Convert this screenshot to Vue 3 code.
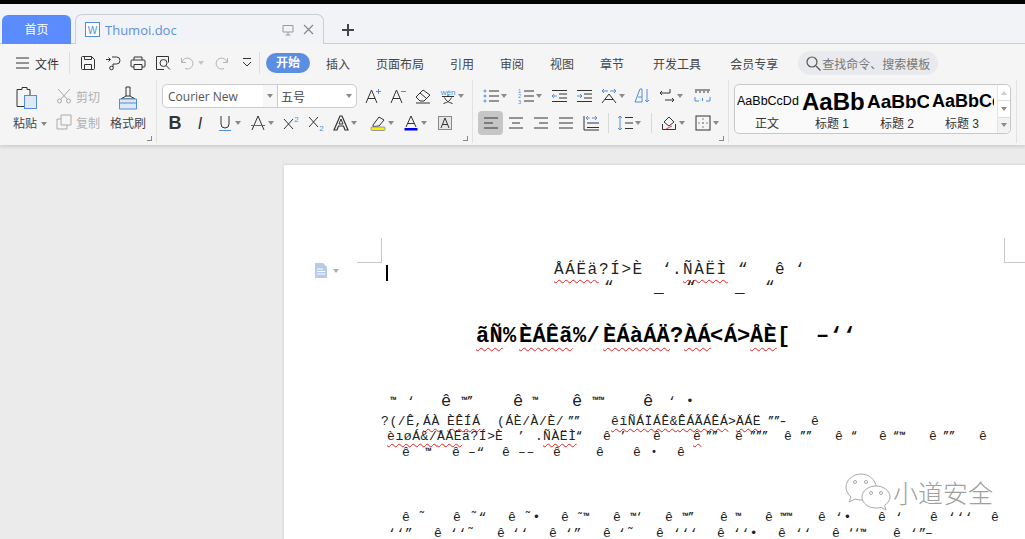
<script setup>
const T = (s, x = 8, y = 13, size = 15, extra = '') =>
  `<text x="${x}" y="${y}" font-size="${size}" text-anchor="middle" fill="#333" stroke="none" font-family="Liberation Sans, sans-serif" ${extra}>${s}</text>`
const blue = '#4f8de0'

const icons = {
  menu: '<path d="M1 3h13M1 8h13M1 13h13"/>',
  save: '<path d="M2.500 1.500h9l3 3v9a1 1 0 0 1-1 1h-11a1 1 0 0 1-1-1v-11a1 1 0 0 1 1-1z"/><path d="M4.500 1.500v3h7v-3M4.500 14.500v-5h7v5"/>',
  pdf: '<path d="M1 4.500h4M3.500 2.500l2 2-2 2M7 2h4.500a3.500 3.500 0 0 1 0 7H8v3"/><circle cx="6.500" cy="13" r="1.800"/>',
  print: '<path d="M4 5V2h8v3M4 12H2a1 1 0 0 1-1-1V6a1 1 0 0 1 1-1h12a1 1 0 0 1 1 1v5a1 1 0 0 1-1 1h-2"/><path d="M4 9.500h8v5H4z"/>',
  preview: '<path d="M9 14.500H1.500v-13h12v6"/><circle cx="8.500" cy="8" r="3.500"/><path d="M11 10.500l4 4"/>',
  undo: '<g stroke="#b4b4b4"><path d="M1.500 3v4.500H6"/><path d="M2 7.500a5.500 5.500 0 1 1 3 6"/></g>',
  redo: '<g stroke="#b4b4b4"><path d="M14.500 3v4.500H10"/><path d="M14 7.500a5.500 5.500 0 1 0-3 6"/></g>',
  more: '<path d="M4 3.500h8M4 7l4 4 4-4"/>',
  grow: '<path d="M1 15L6.500 2 12 15M3 10.500h7"/>' + `<path d="M11 3.500h5M13.500 1v5" stroke="${blue}"/>`,
  shrink: '<path d="M1 15L6.500 2 12 15M3 10.500h7"/>' + `<path d="M11 3.500h5" stroke="${blue}"/>`,
  erase: '<path d="M1 9l7-7 7 5-6 6H5z"/><path d="M1 15h14"/><path d="M5 5l6 5"/>',
  pinyin: `<text x="8" y="6.500" font-size="8" text-anchor="middle" fill="${blue}" stroke="none" font-family="Liberation Sans, sans-serif">wén</text>` + '<path d="M2 8.500h12M8 7v1.500M4.500 9.500c1 3 4 5 8 6M11.500 9.500c-1 3-4 5-8 6"/>',
  bold: T('B', 8, 14, 18, 'font-weight="700"'),
  italic: T('I', 8, 14, 16, 'font-style="italic" font-weight="400"'),
  under: `<path d="M4 1v8a4 4 0 0 0 8 0V1"/><path d="M2 15.500h12" stroke="${blue}"/>`,
  strike: '<path d="M2 15L8 1l6 14M1 10.500h14" />' + '<path d="M1 10.500h14" stroke="#c0403f"/>',
  sup: '<path d="M1 4l9 10M10 4l-9 10"/>' + `<text x="13.500" y="7" font-size="8" text-anchor="middle" fill="${blue}" stroke="none" font-family="Liberation Sans, sans-serif">2</text>`,
  sub: '<path d="M1 2l9 10M10 2l-9 10"/>' + `<text x="13.500" y="15.500" font-size="8" text-anchor="middle" fill="${blue}" stroke="none" font-family="Liberation Sans, sans-serif">2</text>`,
  effect: '<path d="M1 15L7 1h2l6 14h-3l-1.500-4h-5L4 15z" stroke-width="1.200"/><path d="M6 9l2-5 2 5z"/>',
  hilite: '<path d="M3 10l6-8 5 3-5 6-6 .5z"/><rect x="1" y="12" width="14" height="3.500" rx="1" fill="#f7f000" stroke="#999"/>',
  color: '<path d="M3 12L8 1l5 11M4.500 8.500h7"/><rect x="1.500" y="13" width="13" height="2.500" fill="#0000f0" stroke="none"/>',
  charbox: '<rect x="1.500" y="1.500" width="13" height="13" fill="#e6e6e6" stroke="#888"/><path d="M4 13L8 3l4 10M5.500 9.500h5"/>',
  bullets: `<g stroke="${blue}"><circle cx="2" cy="3" r="1"/><circle cx="2" cy="8" r="1"/><circle cx="2" cy="13" r="1"/></g><path d="M6 3h10M6 8h10M6 13h10"/>`,
  numbers: `<g font-size="5.500" fill="${blue}" stroke="none" font-family="Liberation Sans, sans-serif"><text x="0" y="5">1</text><text x="0" y="10">2</text><text x="0" y="15.500">3</text></g><path d="M6 3h10M6 8h10M6 13h10"/>`,
  outdent: `<path d="M1 2.500h15M8 6h8M8 10h8M1 13.500h15"/><path d="M6 8H1M3 6L1 8l2 2" stroke="${blue}"/>`,
  indent: `<path d="M1 2.500h15M8 6h8M8 10h8M1 13.500h15"/><path d="M1 8h5M4 6l2 2-2 2" stroke="${blue}"/>`,
  spacing: `<path d="M1 3h6M3 1L1 3l2 2M15 3H9M13 1l2 2-2 2" stroke="${blue}"/><path d="M1 15L8 6l7 9M4 11.500h8"/>`,
  sort: `<path d="M1 14L6 1h2v13H1zM4 9h4" stroke="${blue}"/><path d="M13 1v13M11 12l2 2 2-2" stroke="${blue}"/>`,
  wrap: '<path d="M1 5h10V1M3 3L1 5l2 2M6 12h9M13 10l2 2-2 2"/>',
  ruler: `<path d="M1 2h15M2 3v2M6 3v2M10 3v2M14 3v2"/><path d="M1 9v4h4M16 9v4h-4M8.500 10v3" stroke="${blue}"/>`,
  left: '<path d="M1 3h14M1 8h9M1 13h14"/>',
  center: '<path d="M1 3h14M4 8h8M1 13h14"/>',
  right: '<path d="M1 3h14M6 8h9M1 13h14"/>',
  just: '<path d="M1 3h14M1 8h14M1 13h14"/>',
  dist: `<path d="M1 1v14M4 8h12M4 12.500h12M1 15h15"/><path d="M3 3h4M5 1L3 3l2 2M9 3h5M12 1l2 2-2 2" stroke="${blue}"/>`,
  line: `<path d="M3 1v14M1 3l2-2 2 2M1 13l2 2 2-2" stroke="${blue}"/><path d="M8 2.500h8M8 8h8M8 13.500h8"/>`,
  shade: '<path d="M3 7l5-5 5 5-5 4z"/><path d="M1.500 9v5.500h13V9"/><path d="M5 14l6-3" stroke="#d44"/>',
  border: '<rect x="1" y="1" width="14" height="14"/><path d="M8 3v2M8 7v2M8 11v2M3 8h2M7 8h2M11 8h2" stroke="#888"/>',
}

const fontRow = [
  { i: 'grow' }, { i: 'shrink' }, { i: 'erase' }, { i: 'pinyin', d: 1 },
]
const fontRow2 = [
  { i: 'bold' }, { i: 'italic' }, { i: 'under', d: 1 }, { i: 'strike', d: 1 }, { i: 'sup' }, { i: 'sub' },
  { i: 'effect', d: 1 }, { i: 'hilite', d: 1, m: 4 }, { i: 'color', d: 1 }, { i: 'charbox', m: 1 },
]
const paraRow = [
  { i: 'bullets', d: 1 }, { i: 'numbers', d: 1, m: 2 }, { i: 'outdent' }, { i: 'indent' }, { i: 'spacing', d: 1 },
  { i: 'sort' }, { i: 'wrap', d: 1 }, { i: 'ruler', m: 2 },
]
const paraRow2 = [
  { i: 'left', on: 1 }, { i: 'center' }, { i: 'right' }, { i: 'just' }, { i: 'dist' },
  { sep: 1, m: 5 }, { i: 'line', d: 1, m: 3 }, { sep: 1, m: 6 }, { i: 'shade', d: 1, m: 4 }, { i: 'border', d: 1, m: 1 },
]
const quick = [
  { i: 'save' }, { i: 'pdf' }, { i: 'print' }, { i: 'preview' }, { i: 'undo', d: 1, dim: 1 }, { i: 'redo' }, { i: 'more', m: 1 },
]
const tabs = [
  { t: '插入', m: 16 }, { t: '页面布局', m: 26 }, { t: '引用', m: 26 }, { t: '审阅', m: 26 }, { t: '视图', m: 26 },
  { t: '章节', m: 26 }, { t: '开发工具', m: 29 }, { t: '会员专享', m: 29 },
]
const styles = [
  { s: 'AaBbCcDd', l: '正文', c: 'p0' }, { s: 'AaBb', l: '标题 1', c: 'p1' },
  { s: 'AaBbCc', l: '标题 2', c: 'p2' }, { s: 'AaBbCc', l: '标题 3', c: 'p3' },
]

// garbled body text: [x, text, wavy]
const raw = [
  [270, 'title', [[554, 'ÅÁËä', 1], [599, '?Í>È'], [662, '‘'], [672, '.'], [683, 'ÑÀËÌ', 1], [738, '“'], [775, 'ê'], [795, '‘']]],
  [288, 'title', [[604, '“'], [654, '_'], [686, '“'], [735, '_'], [765, '“']]],
  [337, 'head', [[476, 'ãÑ', 1], [503, '%'], [519, 'ÈÁÊã', 1], [573, '%/'], [603, 'ÈÁàÁÄ', 1], [670, '?'], [684, 'ÀÁ', 1], [710, '<'], [724, 'Á'], [737, '>'], [750, 'ÅÈ', 1], [777, '['], [816, '–‘‘']]],
  [402, 'body', [[390, '™', 0, 'tiny'], [407, '‘'], [441, 'ê', 0, 'big'], [461, '™”', 0, 'tiny'], [513, 'ê', 0, 'big'], [532, '™', 0, 'tiny'], [572, 'ê', 0, 'big'], [592, '™™', 0, 'tiny'], [643, 'ê', 0, 'big'], [668, '‘'], [686, '•']]],
  [422, 'body', [[381, '?(/Ê,'], [423, 'ÁÀ', 1], [447, 'ÈÊÍÁ', 1], [497, '(ÁÈ/À/È/'], [568, '””', 0, 'tiny'], [611, 'êîÑÁÏÁÊ&', 1], [678, 'ÊÁÃÁÊÁ', 1], [728, '>'], [736, 'ÄÁË', 1], [768, '””–', 0, 'tiny'], [811, 'ê']]],
  [437, 'body', [[387, 'èıøÁ&/', 1], [437, 'ÅÁË', 1], [462, 'ä?Í>'], [495, 'È'], [518, '’', 0, 'tiny'], [535, '.'], [543, 'ÑÀËÌ', 1], [576, '“', 0, 'tiny'], [603, 'ê'], [620, '’', 0, 'tiny'], [653, 'ê'], [693, 'ê', 1], [706, '””', 0, 'tiny'], [735, 'ê'], [750, '”””', 0, 'tiny'], [784, 'ê'], [800, '””', 0, 'tiny'], [835, 'ê'], [851, '“', 0, 'tiny'], [879, 'ê'], [893, '“™', 0, 'tiny'], [929, 'ê'], [943, '””', 0, 'tiny'], [979, 'ê']]],
  [453, 'body', [[402, 'ê'], [425, '™', 0, 'tiny'], [452, 'ê'], [468, '–“'], [502, 'ê'], [518, '––'], [553, 'ê'], [596, 'ê'], [633, 'ê'], [651, '•', 0, 'tiny'], [677, 'ê']]],
  [518, 'body', [[402, 'ê'], [418, '˜'], [453, 'ê'], [470, '˜“'], [508, 'ê'], [524, '˜•'], [561, 'ê'], [577, '˜™', 0, 'tiny'], [613, 'ê'], [630, '™‘', 0, 'tiny'], [665, 'ê'], [682, '™”', 0, 'tiny'], [720, 'ê'], [735, '™', 0, 'tiny'], [765, 'ê'], [780, '™™', 0, 'tiny'], [818, 'ê'], [835, '‘•'], [878, 'ê'], [895, '‘'], [930, 'ê'], [948, '‘‘‘'], [991, 'ê']]],
  [534, 'body', [[388, '‘‘”'], [434, 'ê'], [450, '‘‘˜'], [497, 'ê'], [512, '‘‘'], [549, 'ê'], [565, '‘”'], [603, 'ê'], [618, '‘˜'], [656, 'ê'], [673, '‘‘‘'], [717, 'ê'], [733, '‘‘•'], [778, 'ê'], [795, '‘‘'], [832, 'ê'], [848, '‘‘™', 0, 'tiny'], [893, 'ê'], [910, '‘”'], [925, '–']]],
]
const PAGE_TOP = 165
const LH = 20
const lines = raw.map(([y, cls, toks], n) => {
  const prev = n ? raw[n - 1][0] : PAGE_TOP + LH / 2
  return {
    cls,
    gap: y - prev - (n ? LH : 0),
    pad: toks[0][0] - 284,
    toks: toks.map((k, i) => ({
      x: k[0], t: k[1], wavy: k[2], c: k[3],
      w: toks[i + 1] ? toks[i + 1][0] - k[0] : null,
    })),
  }
})
</script>

<template>
  <div class="app">
    <div class="topbar"></div>
    <div class="tabbar">
      <div class="home">首页</div>
      <div class="doctab">
        <svg class="wicon" width="15" height="15" viewBox="0 0 15 15">
          <rect x="0.500" y="0.500" width="14" height="14" fill="#fff" stroke="#4f8de0" />
          <text x="7.500" y="11.500" font-size="10" text-anchor="middle" fill="#4f8de0" font-family="Liberation Sans, sans-serif">W</text>
        </svg>
        <span class="docname">Thumoi.doc</span>
        <svg class="monitor" width="12" height="12" viewBox="0 0 12 12" fill="none" stroke="#999">
          <path d="M1 1.500h10v6.500H1zM6 8v3M3.500 11h5" />
        </svg>
        <svg class="close" width="11" height="11" viewBox="0 0 11 11" fill="none" stroke="#888" stroke-width="1.200">
          <path d="M1 1l9 9M10 1l-9 9" />
        </svg>
      </div>
      <svg class="plus" width="14" height="14" viewBox="0 0 14 14" fill="none" stroke="#444" stroke-width="2">
        <path d="M7 1v12M1 7h12" />
      </svg>
    </div>

    <div class="menubar">
      <svg class="ic menuic" width="15" height="16" viewBox="0 0 15 16" v-html="icons.menu"></svg>
      <span class="filetxt">文件</span>
      <div class="vsep first"></div>
      <div
        v-for="q in quick"
        :key="q.i"
        class="tool"
        :class="{ drop: q.d, m1: q.m === 1 }"
      >
        <svg class="ic" width="16" height="16" viewBox="0 0 16 16" v-html="icons[q.i]"></svg>
        <i v-if="q.d" class="caret light"></i>
      </div>
      <div class="vsep"></div>
      <div class="pill">开始</div>
      <span
        v-for="t in tabs"
        :key="t.t"
        class="tabitem"
        :class="{ m16: t.m === 16, m26: t.m === 26, m29: t.m === 29 }"
      >{{ t.t }}</span>
      <div class="search">
        <svg width="15" height="15" viewBox="0 0 15 15" fill="none" stroke="#555" stroke-width="1.200">
          <circle cx="6" cy="6" r="5" />
          <path d="M10 10l4.500 4.500" />
        </svg>
        <span>查找命令、搜索模板</span>
      </div>
    </div>

    <div class="ribbon">
      <div class="group clip">
        <div class="bigbtn paste">
          <svg width="22" height="24" viewBox="0 0 22 24" fill="none" stroke="#333">
            <path d="M3 3.500h3v-2h5v2h3v17H1V3.500z" />
            <rect x="8.500" y="9.500" width="12" height="13" fill="#dfe8f5" stroke="#4f8de0" />
          </svg>
          <div class="biglabel">粘贴<i class="caret"></i></div>
        </div>
        <div class="cutcopy">
          <div class="smallrow">
            <svg width="16" height="16" viewBox="0 0 16 16" fill="none" stroke="#aaa">
              <path d="M2 1l9 10M14 1L5 11" />
              <circle cx="3.500" cy="13" r="2" />
              <circle cx="12.500" cy="13" r="2" />
            </svg>
            <span>剪切</span>
          </div>
          <div class="smallrow">
            <svg width="16" height="16" viewBox="0 0 16 16" fill="none" stroke="#aaa">
              <path d="M5 1h10v10H5zM5 5H1v10h10v-4" />
            </svg>
            <span>复制</span>
          </div>
        </div>
        <div class="bigbtn brush">
          <svg width="20" height="24" viewBox="0 0 20 24" fill="none" stroke="#333">
            <path d="M8 1h4v9H8z" />
            <path d="M8 10l-5 3h14l-5-3" />
            <path d="M1.500 13h17v10h-17z" fill="#dfe8f5" stroke="#4f8de0" />
            <path d="M1.500 17h17" stroke="#4f8de0" />
          </svg>
          <div class="biglabel">格式刷</div>
        </div>
        <i class="corner"></i>
      </div>

      <div class="group fontg">
        <div class="row">
          <div class="combo">
            <div class="fname">Courier New</div>
            <div class="fdrop"><i class="caret"></i></div>
            <div class="fsize">五号</div>
            <div class="fdrop end"><i class="caret"></i></div>
          </div>
          <div class="m3"></div>
          <div v-for="b in fontRow" :key="b.i" class="tool" :class="{ drop: b.d }">
            <svg class="ic" width="16" height="16" viewBox="0 0 16 16" v-html="icons[b.i]"></svg>
            <i v-if="b.d" class="caret"></i>
          </div>
        </div>
        <div class="row r2">
          <div v-for="b in fontRow2" :key="b.i" class="tool" :class="{ drop: b.d, m4: b.m === 4, m1: b.m === 1 }">
            <svg class="ic" width="16" height="16" viewBox="0 0 16 16" v-html="icons[b.i]"></svg>
            <i v-if="b.d" class="caret"></i>
          </div>
        </div>
        <i class="corner"></i>
      </div>

      <div class="group parag">
        <div class="row">
          <div v-for="b in paraRow" :key="b.i" class="tool" :class="{ drop: b.d, m2: b.m === 2 }">
            <svg class="ic" width="16" height="16" viewBox="0 0 16 16" v-html="icons[b.i]"></svg>
            <i v-if="b.d" class="caret"></i>
          </div>
        </div>
        <div class="row r2">
          <template v-for="(b, n) in paraRow2" :key="n">
            <div v-if="b.sep" class="rsep" :class="{ m5: b.m === 5, m6: b.m === 6 }"></div>
            <div
              v-else
              class="tool"
              :class="{ drop: b.d, on: b.on, m1: b.m === 1, m3l: b.m === 3, m4: b.m === 4 }"
            >
              <svg class="ic" width="16" height="16" viewBox="0 0 16 16" v-html="icons[b.i]"></svg>
              <i v-if="b.d" class="caret"></i>
            </div>
          </template>
        </div>
        <i class="corner"></i>
      </div>

      <div class="group styleg">
        <div class="stylebox">
          <div v-for="s in styles" :key="s.c" class="stylecell">
            <div class="preview" :class="s.c">{{ s.s }}</div>
            <div class="slabel">{{ s.l }}</div>
          </div>
          <div class="scroll">
            <div><i class="caret up"></i></div>
            <div><i class="caret"></i></div>
            <div class="last"><i class="caret bar"></i></div>
          </div>
        </div>
      </div>
    </div>

    <div class="workspace">
      <div class="page">
        <i class="mark ml"></i>
        <i class="mark mr"></i>
        <svg class="noteic" width="14" height="15" viewBox="0 0 14 15">
          <path d="M1 0h8l4 4v11H1z" fill="#b7cbea" />
          <path d="M3 6h6M3 8.500h8M3 11h8" stroke="#fff" fill="none" />
        </svg>
        <i class="notecaret caret"></i>
        <i class="cursor"></i>
        <div
          v-for="(l, n) in lines"
          :key="n"
          class="docline"
          :class="l.cls"
          :style="{ marginTop: l.gap + 'px', paddingLeft: l.pad + 'px' }"
        >
          <span
            v-for="k in l.toks"
            :key="k.x"
            class="tok"
            :class="[k.c, { wavy: k.wavy }]"
            :style="k.w ? { width: k.w + 'px' } : null"
          >{{ k.t }}</span>
        </div>
      </div>
    </div>

    <div class="watermark">
      <svg width="48" height="38" viewBox="0 0 48 38" fill="#fff" stroke="#a8a8a8">
        <path d="M16 1C8 1 1 7 1 14c0 4 2 7 5 10l-2 5 6-3c2 .6 4 1 6 1 8 0 15-6 15-13S24 1 16 1z" fill="none" />
        <path d="M31 13c-8 0-14 5-14 11s6 11 14 11c2 0 3 0 5-.6l5 2.600-1.500-4.500C43 30 45 27 45 24c0-6-6-11-14-11z" />
        <circle cx="10" cy="9" r="1.500" fill="none" />
        <circle cx="21" cy="9" r="1.500" fill="none" />
        <circle cx="26" cy="20" r="1.500" fill="none" />
        <circle cx="36" cy="20" r="1.500" fill="none" />
      </svg>
      <span>小道安全</span>
    </div>
  </div>
</template>

<style scoped>
.app {
  position: relative;
  width: 1025px;
  height: 539px;
  overflow: hidden;
  background: #ebebeb;
  font-family: "Liberation Sans", "Noto Sans CJK SC", sans-serif;
  font-size: 12px;
  color: #444;
}
.topbar {
  height: 4px;
  background: #000;
}
.tabbar {
  height: 40px;
  box-sizing: border-box;
  background: #f2f3f7;
  border-bottom: 1px solid #c9ced6;
  display: flex;
  align-items: flex-end;
  padding-left: 2px;
}
.home {
  width: 69px;
  height: 29px;
  margin-bottom: -1px;
  background: #5b8cff;
  border-radius: 6px 6px 0 0;
  color: #fff;
  text-align: center;
  line-height: 31px;
}
.doctab {
  width: 249px;
  height: 30px;
  margin: 0 0 -1px 4px;
  box-sizing: border-box;
  border: 1px solid #c9ced6;
  border-bottom: 0;
  border-radius: 7px 7px 0 0;
  background: #f2f3f7;
  display: flex;
  align-items: center;
  padding-left: 9px;
}
.docname {
  margin-left: 5px;
  font-family: "Open Sans", sans-serif;
  font-size: 13px;
  color: #5c8fe6;
}
.monitor {
  margin-left: auto;
}
.close {
  margin: 0 9px 0 9px;
}
.plus {
  margin: 0 0 6px 17px;
}
.menubar {
  height: 36px;
  box-sizing: border-box;
  padding: 2px 0 0 15px;
  background: #f5f5f6;
  display: flex;
  align-items: center;
}
.ic {
  fill: none;
  stroke: #333;
  stroke-width: 1;
  flex: none;
  overflow: visible;
}
.filetxt {
  margin-left: 5px;
  color: #333;
}
.vsep {
  width: 1px;
  height: 22px;
  background: #dcdcdc;
}
.vsep.first {
  margin: 0 5px 0 10px;
}
.tool {
  flex: none;
  box-sizing: border-box;
  width: 25px;
  height: 24px;
  padding-left: 4.500px;
  display: flex;
  align-items: center;
  border-radius: 4px;
}
.tool.drop {
  width: 33px;
}
.tool.on {
  background: #c6c6c6;
}
.caret {
  display: inline-block;
  flex: none;
  width: 0;
  height: 0;
  border: 3.500px solid transparent;
  border-top: 4px solid #8a8a8a;
  border-bottom: 0;
}
.tool .caret {
  margin-left: 2px;
}
.caret.light {
  border-top-color: #c4c4c4;
}
.m1 { margin-left: 1px; }
.m2 { margin-left: 2px; }
.m3 { width: 3px; }
.m3l { margin-left: 3px; }
.m4 { margin-left: 4px; }
.m5 { margin-left: 5px; }
.m6 { margin-left: 6px; }
.pill {
  width: 44px;
  height: 20px;
  margin-left: 6px;
  border-radius: 10px;
  background: #5b8ee0;
  color: #fff;
  font-weight: 700;
  text-align: center;
  line-height: 20px;
}
.tabitem {
  color: #444;
}
.m16 { margin-left: 16px; }
.m26 { margin-left: 26px; }
.m29 { margin-left: 29px; }
.search {
  margin-left: 20px;
  width: 140px;
  height: 24px;
  box-sizing: border-box;
  padding-left: 8px;
  border-radius: 12px;
  background: #e8eaed;
  color: #777;
  display: flex;
  align-items: center;
  gap: 1px;
}
.ribbon {
  height: 65px;
  background: #f5f5f6;
  box-shadow: 0 2px 3px rgba(0, 0, 0, 0.12);
  display: flex;
  position: relative;
}
.group {
  position: relative;
  box-sizing: border-box;
  height: 63px;
  border-right: 1px solid #e2e2e2;
  padding-top: 4px;
  flex: none;
}
.corner {
  position: absolute;
  right: 4px;
  bottom: 2px;
  width: 4px;
  height: 4px;
  border-right: 1px solid #888;
  border-bottom: 1px solid #888;
}
.clip {
  width: 157px;
  padding-left: 12px;
  display: flex;
}
.bigbtn {
  display: flex;
  flex-direction: column;
  align-items: center;
}
.paste {
  width: 36px;
  padding-top: 2px;
}
.paste svg {
  margin-right: 7px;
}
.biglabel {
  margin-top: 4px;
  color: #444;
  white-space: nowrap;
}
.biglabel .caret {
  margin: 0 0 2px 4px;
}
.cutcopy {
  margin-left: 8px;
  width: 54px;
  padding-top: 4px;
}
.smallrow {
  height: 26px;
  display: flex;
  align-items: flex-start;
  gap: 4px;
  color: #b0b0b0;
}
.brush {
  width: 36px;
  padding-top: 2px;
}
.fontg {
  width: 311px;
  margin-left: 5px;
}
.row {
  display: flex;
  align-items: center;
  height: 24px;
}
.r2 {
  margin-top: 3px;
}
.combo {
  width: 195px;
  height: 24px;
  box-sizing: border-box;
  border: 1px solid #ccc;
  border-radius: 5px;
  background: #fff;
  display: flex;
  align-items: center;
}
.fname {
  width: 100px;
  padding-left: 5px;
  box-sizing: border-box;
  font-family: "Open Sans", sans-serif;
  color: #555;
}
.fdrop {
  width: 14px;
  height: 22px;
  background: #f7f7f7;
  border-right: 1px solid #ccc;
  display: flex;
  align-items: center;
  justify-content: center;
}
.fdrop.end {
  border: 0;
  background: none;
  margin-left: auto;
}
.fsize {
  padding-left: 3px;
  color: #444;
}
.parag {
  width: 251px;
  margin-left: 5px;
}
.rsep {
  width: 1px;
  height: 20px;
  background: #d8d8d8;
  flex: none;
}
.styleg {
  width: 283px;
  margin-left: 5px;
}
.stylebox {
  width: 277px;
  height: 50px;
  box-sizing: border-box;
  border: 1px solid #c8c8c8;
  border-radius: 5px;
  background: #fafafa;
  display: flex;
  padding-left: 2px;
}
.stylecell {
  width: 65px;
  flex: none;
  text-align: center;
}
.preview {
  box-sizing: border-box;
  width: 62px;
  height: 31px;
  line-height: 33px;
  color: #000;
  white-space: nowrap;
  overflow: hidden;
  text-align: left;
}
.p0 { font-size: 12.500px; }
.p1 { font-size: 24px; font-weight: 700; }
.p2 { font-size: 19px; font-weight: 700; }
.p3 { font-size: 18px; font-weight: 700; }
.slabel {
  width: 60px;
  color: #333;
  line-height: 16px;
}
.scroll {
  margin-left: auto;
  width: 15px;
  border-left: 1px solid #e4e4e4;
  background: #fff;
  border-radius: 0 5px 5px 0;
  display: flex;
  flex-direction: column;
}
.scroll div {
  flex: 1;
  display: flex;
  align-items: center;
  justify-content: center;
  border-bottom: 1px solid #ddd;
}
.scroll .last {
  border-bottom: 0;
  background: #f2f2f2;
  border-radius: 0 0 5px 0;
}
.caret.up {
  border-top: 0;
  border-bottom: 4px solid #ccc;
}
.caret.bar {
  box-shadow: 0 -3px 0 -2px #8a8a8a;
}
.workspace {
  padding: 20px 0 0 284px;
}
.page {
  position: relative;
  display: flow-root;
  width: 760px;
  height: 400px;
  background: #fff;
  box-shadow: 0 0 3px rgba(0, 0, 0, 0.15);
}
.mark {
  position: absolute;
  top: 73px;
  width: 24px;
  height: 24px;
  border-bottom: 1px solid #c8c8c8;
}
.ml {
  left: 73px;
  border-right: 1px solid #c8c8c8;
}
.mr {
  left: 720px;
  border-left: 1px solid #c8c8c8;
}
.noteic {
  position: absolute;
  left: 30px;
  top: 98px;
}
.notecaret {
  position: absolute;
  left: 49px;
  top: 104px;
  border-top-color: #b0b0b0;
}
.cursor {
  position: absolute;
  left: 102px;
  top: 100px;
  width: 2px;
  height: 16px;
  background: #000;
}
.docline {
  height: 20px;
  line-height: 20px;
  display: flex;
  font-family: "Liberation Mono", monospace;
  white-space: pre;
  color: #222;
}
.tok {
  flex: none;
}
.title {
  font-size: 16px;
  letter-spacing: 1.600px;
}
.head {
  font-size: 22px;
  font-weight: 700;
  color: #000;
  letter-spacing: 0.200px;
}
.body {
  font-size: 13px;
  letter-spacing: 0.600px;
}
.big {
  font-size: 17px;
}
.tiny {
  font-size: 10px;
  font-weight: 700;
  letter-spacing: 0;
}
.wavy {
  text-decoration: underline wavy #e02020 1px;
  text-underline-offset: 3px;
}
.title .wavy,
.head .wavy {
  text-underline-offset: 5px;
}
.watermark {
  position: absolute;
  left: 845px;
  top: 473px;
  display: flex;
  align-items: center;
  gap: 0;
}
.watermark span {
  font-size: 25px;
  color: #a0a0a0;
  font-weight: 300;
  text-shadow: 0 0 1px #fff;
  letter-spacing: 0;
  white-space: nowrap;
  font-family: "Noto Sans CJK SC", sans-serif;
}
</style>
